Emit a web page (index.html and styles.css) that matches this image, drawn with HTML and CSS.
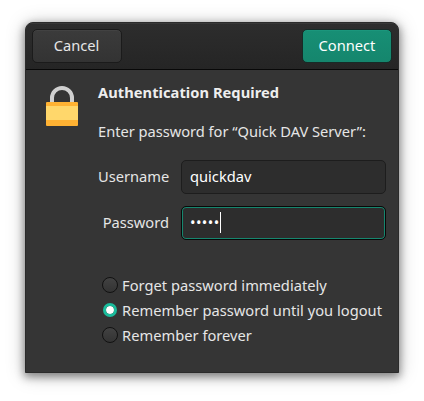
FILE: index.html
```html
<!DOCTYPE html>
<html lang="en">
<head>
<meta charset="utf-8">
<title>Authentication Required</title>
<link rel="stylesheet" href="styles.css">
</head>
<body>
<form class="dialog">
  <header class="bar">
    <button type="button" class="btn">Cancel</button>
    <button type="button" class="btn primary">Connect</button>
  </header>
  <main class="content">
    <svg class="lock" width="32" height="40" viewBox="0 0 32 40">
      <path d="M6 18V12a10 10 0 0 1 20 0v6" fill="none" stroke="#d0d0d0" stroke-width="4"/>
      <rect y="16" width="32" height="24" rx="1" fill="#ffb233"/>
      <rect y="20" width="32" height="14" fill="#ffd76b"/>
    </svg>
    <div class="body">
      <h1>Authentication Required</h1>
      <p>Enter password for “Quick DAV Server”:</p>
      <div class="fields">
        <span class="label">Username</span>
        <div class="entry">quickdav</div>
        <span class="label">Password</span>
        <div class="entry focused"><span class="dots">•••••</span><i class="caret"></i></div>
      </div>
      <div class="options">
        <div class="option"><i class="radio"></i>Forget password immediately</div>
        <div class="option"><i class="radio checked"></i>Remember password until you logout</div>
        <div class="option"><i class="radio"></i>Remember forever</div>
      </div>
    </div>
  </main>
</form>
</body>
</html>
```
FILE: styles.css
```css
* { box-sizing: border-box; }
body {
  margin: 0;
  padding: 22px 25px 28px;
  background: #fff;
  overflow: hidden;
  font: 14.667px/20px "Noto Sans", sans-serif;
  color: #e6e6e6;
}
.dialog {
  height: 351px;
  border: 1px solid #2b2b2b;
  border-radius: 8px 8px 0 0;
  background: #353535;
  box-shadow: 0 3px 9px 1px rgba(0,0,0,.42), 0 2px 20px rgba(0,0,0,.22);
  overflow: hidden;
}
.bar {
  height: 47px;
  display: flex;
  justify-content: space-between;
  padding: 6px 6px 0;
  background: linear-gradient(#2d2d2d, #252525);
  border-bottom: 1px solid #080808;
  box-shadow: inset 0 1px #383838;
}
.btn {
  width: 90px;
  height: 34px;
  padding: 0 1px 3px 0;
  border: 1px solid #1b1b1b;
  border-radius: 5px;
  background: linear-gradient(#3b3b3b, #333);
  box-shadow: inset 0 1px #424242;
  color: #e6e6e6;
  font: inherit;
}
.primary {
  padding-right: 0;
  border-color: #172b27;
  background: linear-gradient(#178f75, #15866d);
  box-shadow: inset 0 1px #1b967c;
  color: #fff;
}
.content { display: flex; padding: 16px 12px 0 20px; }
.lock { flex: none; margin-right: 20px; }
.body { flex: 1; min-width: 0; }
h1 { margin: -4px 0 0; font-size: inherit; line-height: 20px; font-weight: 700; letter-spacing: .05px; color: #eee; }
p { margin: 19px 0; letter-spacing: -.02px; white-space: nowrap; }
.fields {
  display: grid;
  grid-template-columns: 71px 205px;
  column-gap: 12px;
  row-gap: 12px;
  align-items: center;
}
.label { padding-bottom: 2px; text-align: right; }
.entry {
  display: flex;
  align-items: center;
  height: 34px;
  padding: 0 8px 3px;
  border: 1px solid #1d1d1d;
  border-radius: 5px;
  background: #2d2d2d;
  color: #fff;
}
.focused { padding-bottom: 1px; border-color: #080808; box-shadow: inset 0 0 0 1px #16866e; }
.dots { margin-top: -1px; letter-spacing: .4px; }
.caret { width: 1px; height: 21px; margin: 0; background: #fff; }
.options { margin-top: 32px; }
.option { display: flex; align-items: center; height: 25px; letter-spacing: .02px; white-space: nowrap; }
.radio {
  flex: none;
  width: 16px;
  height: 16px;
  margin: 1px 4px 0;
  border: 1px solid #111;
  border-radius: 50%;
  background: linear-gradient(#424242, #333);
}
.checked { width: 14px; height: 14px; margin: 1px 5px 0; border: 3px solid #1abc9c; background: #fff; background-clip: padding-box; }
```
